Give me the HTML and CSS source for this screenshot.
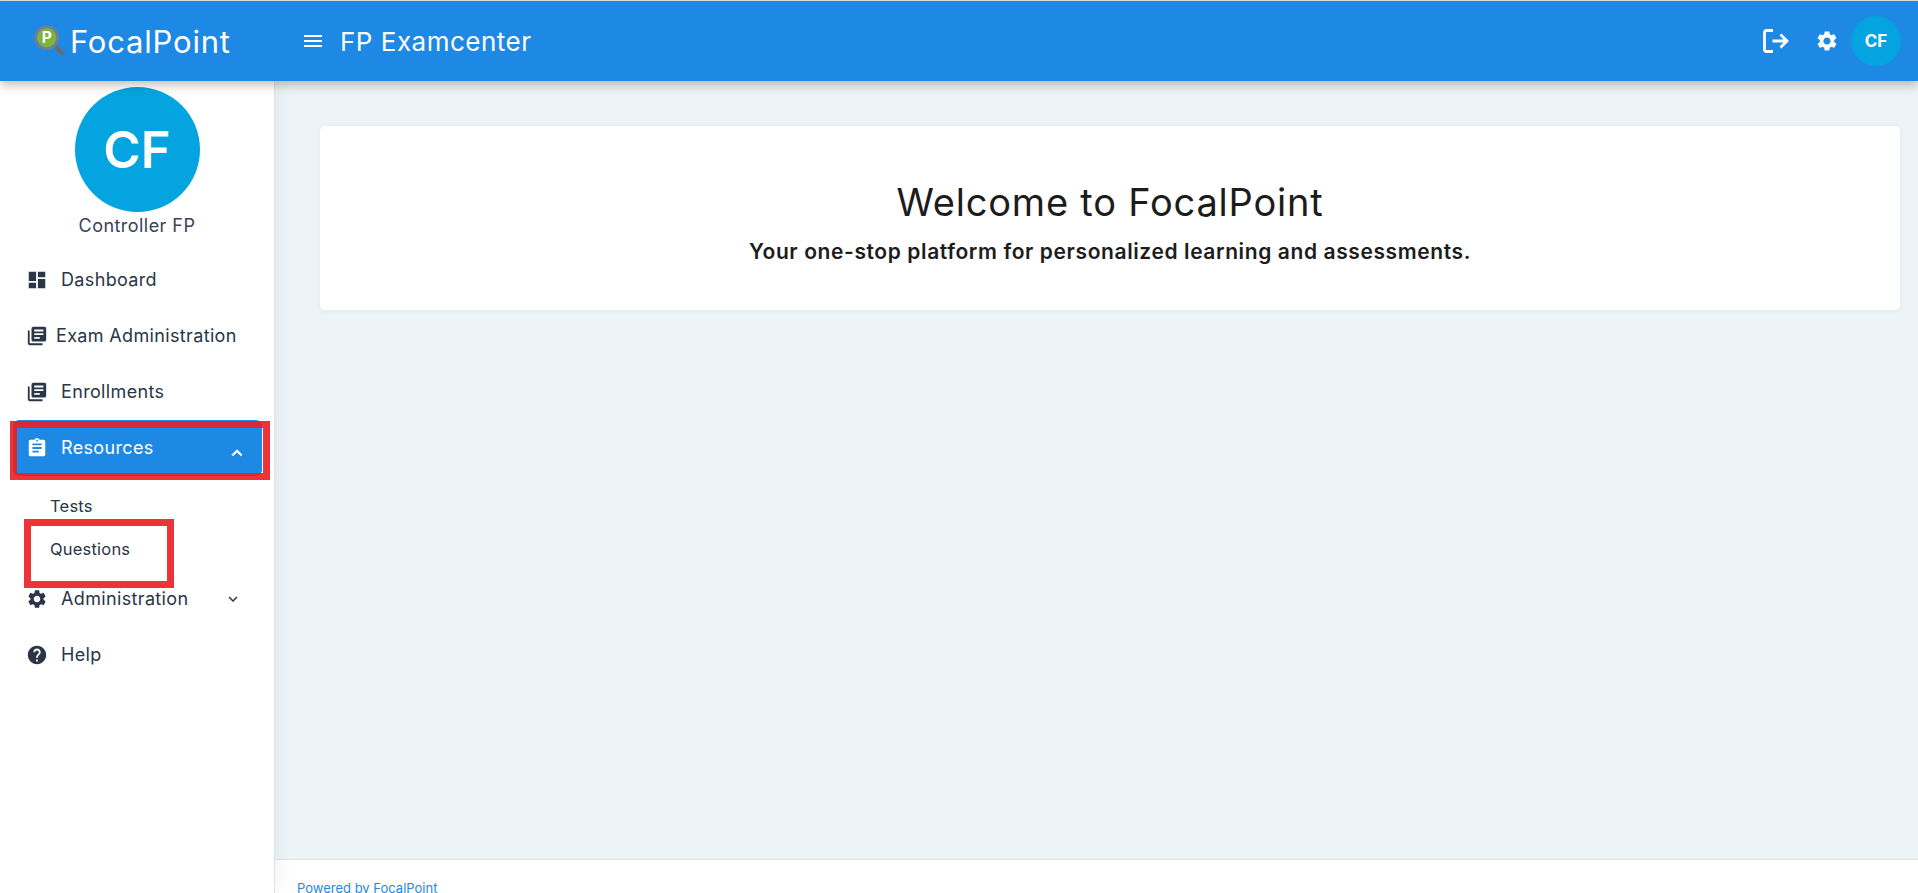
FILE: index.html
```html
<!DOCTYPE html>
<html lang="en">
<head>
    <meta charset="UTF-8">
    <meta name="viewport" content="width=device-width, initial-scale=1.0">
    <title>FP Examcenter</title>
    <link rel="stylesheet" href="styles.css">
</head>
<body>
    <header class="topbar">
        <div class="brand">
            <svg class="brand-logo" viewBox="0 0 30 30">
                <line x1="18" y1="18" x2="27" y2="27" stroke="#666b73" stroke-width="4"/>
                <circle cx="11.5" cy="11.5" r="10" fill="#7cb53c" stroke="#6d7f96" stroke-width="2.6"/>
                <text x="11.5" y="16.5" text-anchor="middle" class="brand-logo-letter">P</text>
            </svg>
            <span class="brand-name">FocalPoint</span>
        </div>
        <svg class="icon menu-icon" viewBox="0 0 24 24"><path d="M3 18h18v-2H3v2zm0-5h18v-2H3v2zm0-7v2h18V6H3z"/></svg>
        <span class="app-title">FP Examcenter</span>
        <div class="topbar-right">
            <svg class="logout-icon" viewBox="0 0 26 24">
                <path d="M10 1.500H3.500a2 2 0 0 0-2 2v17a2 2 0 0 0 2 2H10M9.500 12H24M17.500 5.500 24 12l-6.500 6.500"/>
            </svg>
            <svg class="icon gear-icon" viewBox="0 0 24 24"><path d="M19.14 12.94c.04-.3.06-.61.06-.94 0-.32-.02-.64-.07-.94l2.03-1.58c.18-.14.23-.41.12-.61l-1.92-3.32c-.12-.22-.37-.29-.59-.22l-2.39.96c-.5-.38-1.03-.7-1.62-.94l-.36-2.54c-.04-.24-.24-.41-.48-.41h-3.84c-.24 0-.43.17-.47.41l-.36 2.54c-.59.24-1.13.57-1.62.94l-2.39-.96c-.22-.08-.47 0-.59.22L2.74 8.87c-.12.21-.08.47.12.61l2.03 1.58c-.05.3-.09.63-.09.94s.02.64.07.94l-2.03 1.58c-.18.14-.23.41-.12.61l1.92 3.32c.12.22.37.29.59.22l2.39-.96c.5.38 1.03.7 1.62.94l.36 2.54c.05.24.24.41.48.41h3.84c.24 0 .44-.17.47-.41l.36-2.54c.59-.24 1.13-.56 1.62-.94l2.39.96c.22.08.47 0 .59-.22l1.92-3.32c.12-.22.07-.47-.12-.61l-2.01-1.58zM12 15.6c-1.98 0-3.6-1.62-3.6-3.6s1.62-3.6 3.6-3.6 3.6 1.62 3.6 3.6-1.62 3.6-3.6 3.6z"/></svg>
            <div class="avatar avatar-small">CF</div>
        </div>
    </header>

    <div class="layout">
        <aside class="sidebar">
            <div class="profile">
                <div class="avatar avatar-large">CF</div>
                <div class="profile-name">Controller FP</div>
            </div>
            <nav class="nav">
                <a class="nav-item">
                    <svg class="icon nav-icon" viewBox="0 0 24 24"><path d="M3 13h8V3H3v10zm0 8h8v-6H3v6zm10 0h8V11h-8v10zm0-18v6h8V3h-8z"/></svg>
                    <span class="nav-label">Dashboard</span>
                </a>
                <a class="nav-item">
                    <svg class="icon nav-icon" viewBox="0 0 24 24"><path d="M4 6H2v14c0 1.100.9 2 2 2h14v-2H4V6zm16-4H8c-1.100 0-2 .9-2 2v12c0 1.100.9 2 2 2h12c1.100 0 2-.9 2-2V4c0-1.100-.9-2-2-2zm-1 9H9V9h10v2zm-4 4H9v-2h6v2zm4-8H9V5h10v2z"/></svg>
                    <span class="nav-label nav-label-tight">Exam Administration</span>
                </a>
                <a class="nav-item">
                    <svg class="icon nav-icon" viewBox="0 0 24 24"><path d="M4 6H2v14c0 1.100.9 2 2 2h14v-2H4V6zm16-4H8c-1.100 0-2 .9-2 2v12c0 1.100.9 2 2 2h12c1.100 0 2-.9 2-2V4c0-1.100-.9-2-2-2zm-1 9H9V9h10v2zm-4 4H9v-2h6v2zm4-8H9V5h10v2z"/></svg>
                    <span class="nav-label">Enrollments</span>
                </a>
                <a class="nav-item active">
                    <svg class="icon nav-icon" viewBox="0 0 24 24"><path d="M19 3h-4.180C14.400 1.840 13.300 1 12 1c-1.300 0-2.400.84-2.820 2H5c-1.100 0-2 .9-2 2v14c0 1.100.9 2 2 2h14c1.100 0 2-.9 2-2V5c0-1.100-.9-2-2-2zm-7 0c.55 0 1 .45 1 1s-.45 1-1 1-1-.45-1-1 .45-1 1-1zm2 14H7v-2h7v2zm3-4H7v-2h10v2zm0-4H7V7h10v2z"/></svg>
                    <span class="nav-label">Resources</span>
                    <svg class="icon nav-chevron chevron-up" viewBox="0 0 24 24"><path d="M12 8l-6 6 1.410 1.410L12 10.830l4.590 4.580L18 14z"/></svg>
                    <span class="mark mark-resources"></span>
                </a>
                <div class="subnav">
                    <a class="subnav-item">Tests</a>
                    <a class="subnav-item">Questions<span class="mark mark-questions"></span></a>
                </div>
                <a class="nav-item">
                    <svg class="icon nav-icon" viewBox="0 0 24 24"><path d="M19.14 12.94c.04-.3.06-.61.06-.94 0-.32-.02-.64-.07-.94l2.03-1.58c.18-.14.23-.41.12-.61l-1.92-3.32c-.12-.22-.37-.29-.59-.22l-2.39.96c-.5-.38-1.03-.7-1.62-.94l-.36-2.54c-.04-.24-.24-.41-.48-.41h-3.84c-.24 0-.43.17-.47.41l-.36 2.54c-.59.24-1.13.57-1.62.94l-2.39-.96c-.22-.08-.47 0-.59.22L2.74 8.87c-.12.21-.08.47.12.61l2.03 1.58c-.05.3-.09.63-.09.94s.02.64.07.94l-2.03 1.58c-.18.14-.23.41-.12.61l1.92 3.32c.12.22.37.29.59.22l2.39-.96c.5.38 1.03.7 1.62.94l.36 2.54c.05.24.24.41.48.41h3.84c.24 0 .44-.17.47-.41l.36-2.54c.59-.24 1.13-.56 1.62-.94l2.39.96c.22.08.47 0 .59-.22l1.92-3.32c.12-.22.07-.47-.12-.61l-2.01-1.58zM12 15.6c-1.980 0-3.600-1.620-3.600-3.600s1.620-3.600 3.600-3.600 3.600 1.620 3.600 3.600-1.620 3.600-3.600 3.600z"/></svg>
                    <span class="nav-label">Administration</span>
                    <svg class="icon nav-chevron" viewBox="0 0 24 24"><path d="M16.590 8.590L12 13.170 7.410 8.590 6 10l6 6 6-6z"/></svg>
                </a>
                <a class="nav-item">
                    <svg class="icon nav-icon" viewBox="0 0 24 24"><path d="M12 2C6.480 2 2 6.480 2 12s4.480 10 10 10 10-4.480 10-10S17.520 2 12 2zm1 17h-2v-2h2v2zm2.070-7.750l-.9.92C13.450 12.900 13 13.500 13 15h-2v-.5c0-1.100.45-2.100 1.170-2.830l1.240-1.260c.37-.36.59-.86.59-1.410 0-1.100-.9-2-2-2s-2 .9-2 2H8c0-2.210 1.790-4 4-4s4 1.790 4 4c0 .88-.36 1.680-.93 2.250z"/></svg>
                    <span class="nav-label">Help</span>
                </a>
            </nav>
        </aside>

        <div class="main">
            <main class="content">
                <section class="welcome-card">
                    <h1>Welcome to FocalPoint</h1>
                    <p>Your one-stop platform for personalized learning and assessments.</p>
                </section>
            </main>
            <footer class="footer">Powered by FocalPoint</footer>
        </div>
    </div>
</body>
</html>
```

FILE: styles.css
```css
* {
    margin: 0;
    padding: 0;
    box-sizing: border-box;
    font-family: 'Inter', 'Open Sans', sans-serif;
}

body {
    height: 893px;
    overflow: hidden;
    padding-top: 1px;
    background: #e3e6e8;
    display: flex;
    flex-direction: column;
}

.icon {
    fill: currentColor;
    flex: none;
}

/* top bar */
.topbar {
    height: 80px;
    flex: none;
    display: flex;
    align-items: center;
    background: #1e88e5;
    color: white;
    padding: 0 17px 0 34px;
    position: relative;
    z-index: 2;
    box-shadow: 0 4px 10px rgba(0, 0, 0, 0.25);
}

.brand {
    width: 269px;
    display: flex;
    align-items: center;
    gap: 3px;
}

.brand-logo {
    width: 33px;
    height: 33px;
}

.brand-logo-letter {
    fill: white;
    font-size: 14px;
    font-weight: 700;
}

.brand-name {
    font-size: 31px;
    letter-spacing: 0.8px;
}

.menu-icon {
    width: 24px;
    height: 24px;
    margin-left: -2px;
}

.app-title {
    font-size: 26px;
    letter-spacing: 0.5px;
    margin-left: 15px;
}

.topbar-right {
    margin-left: auto;
    display: flex;
    align-items: center;
}

.logout-icon {
    width: 26px;
    height: 24px;
    fill: none;
    stroke: white;
    stroke-width: 2.8;
}

.gear-icon {
    width: 24px;
    height: 24px;
    margin-left: 26px;
    margin-right: 12px;
}

.avatar {
    display: flex;
    align-items: center;
    justify-content: center;
    border-radius: 50%;
    background: #03a4e0;
    color: white;
    font-weight: 600;
}

.avatar-small {
    width: 50px;
    height: 50px;
    font-size: 17px;
    font-weight: 700;
}

.avatar-large {
    width: 125px;
    height: 125px;
    font-size: 51px;
}

/* layout */
.layout {
    flex: 1;
    display: flex;
    min-height: 0;
}

.sidebar {
    width: 275px;
    flex: none;
    background: white;
    border-right: 1px solid #dde2e6;
    box-shadow: 0 0 20px rgba(0, 0, 0, 0.07);
    position: relative;
    z-index: 1;
}

.profile {
    display: flex;
    flex-direction: column;
    align-items: center;
    padding-top: 6px;
}

.profile-name {
    font-size: 18px;
    letter-spacing: 0.45px;
    color: #3a4254;
    margin-top: 2px;
    line-height: 24px;
    margin-bottom: 1px;
}

.nav {
    padding: 0 12px 0 13px;
    margin-top: 13px;
}

.nav-item {
    height: 56px;
    display: flex;
    align-items: center;
    padding-left: 13px;
    border-radius: 6px;
    color: #2a3547;
    position: relative;
}

.nav-item.active {
    background: #1e88e5;
    color: white;
}

.nav-icon {
    width: 22px;
    height: 22px;
}

.nav-label {
    font-size: 18px;
    letter-spacing: 0.35px;
    margin-left: 13px;
    margin-bottom: 2px;
}

.nav-label-tight {
    margin-left: 8px;
}

.nav-chevron {
    width: 18px;
    height: 18px;
    position: absolute;
    left: 211px;
}

.chevron-up {
    width: 20px;
    height: 20px;
    left: 214px;
    top: 23px;
    stroke: currentColor;
    stroke-width: 1;
}

.subnav {
    margin-top: 9px;
}

.subnav-item {
    height: 43px;
    display: flex;
    align-items: center;
    padding-left: 37px;
    padding-bottom: 2px;
    font-size: 16.5px;
    letter-spacing: 0.2px;
    color: #2a3547;
    position: relative;
}

/* red review marks drawn over the menu */
.mark {
    position: absolute;
    border: 7px solid rgba(235, 30, 35, 0.9);
}

.mark-resources {
    left: -3px;
    top: 1px;
    width: 260px;
    height: 59px;
}

.mark-questions {
    left: 11px;
    top: -9px;
    width: 150px;
    height: 69px;
    border-color: #ee3338;
}

/* main area */
.main {
    flex: 1;
    min-width: 0;
    display: flex;
    flex-direction: column;
}

.content {
    flex: 1;
    background: #ecf4f7;
    padding: 45px 18px 0 45px;
}

.welcome-card {
    height: 184px;
    background: white;
    border-radius: 5px;
    box-shadow: 0 1px 6px rgba(0, 0, 0, 0.05);
    display: flex;
    flex-direction: column;
    align-items: center;
    padding-top: 51px;
    color: #1c1c1c;
}

.welcome-card h1 {
    font-size: 38px;
    font-weight: 400;
    letter-spacing: 0.8px;
    line-height: 50px;
}

.welcome-card p {
    font-size: 21px;
    font-weight: 600;
    letter-spacing: 0.6px;
    margin-top: 12px;
    line-height: 26px;
}

.footer {
    height: 34px;
    flex: none;
    background: white;
    border-top: 1px solid #dfe5ea;
    padding: 19px 0 0 22px;
    font-size: 13px;
    line-height: 18px;
    color: #1e88e5;
}
```
